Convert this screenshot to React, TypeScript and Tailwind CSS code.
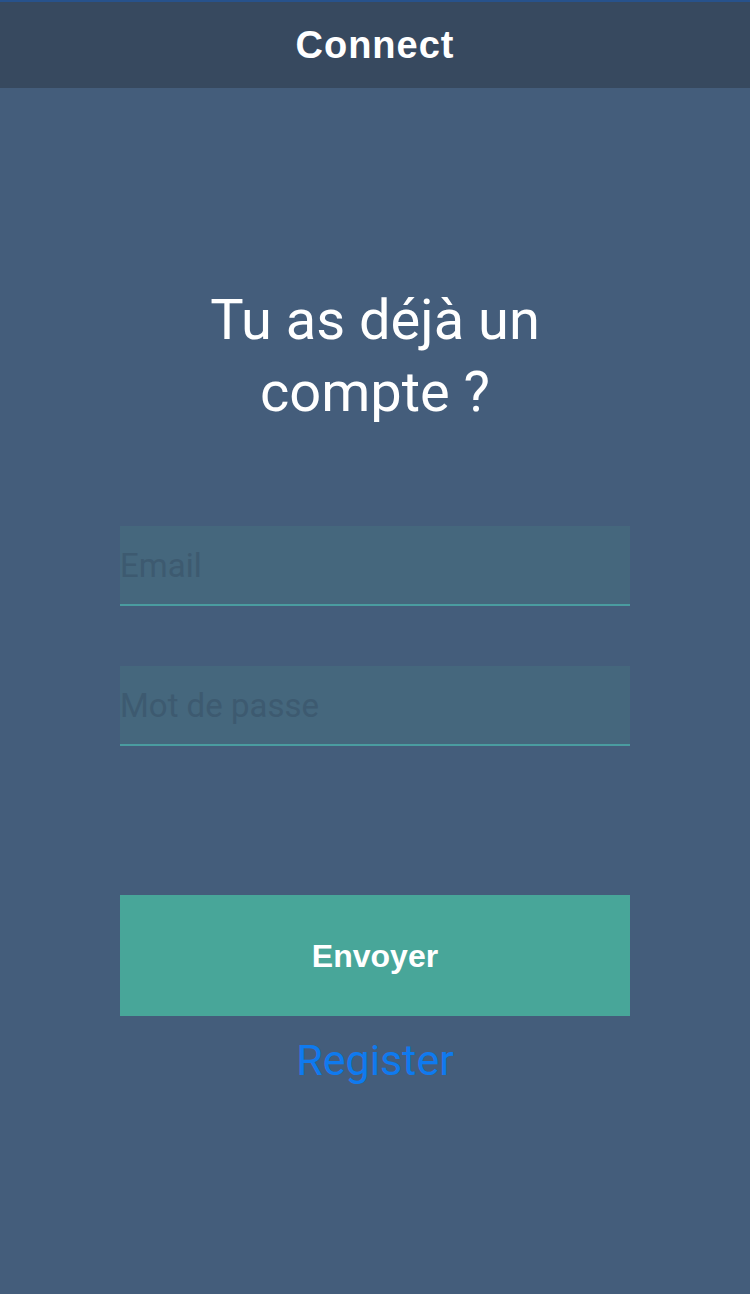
import React from "react";

export default function App() {
  return (
    <div className="w-[750px] h-[1294px] bg-[#445d7b] flex flex-col" style={{ fontFamily: "Roboto, 'Liberation Sans', sans-serif" }}>
      <div className="h-[88px] bg-[#37495f] border-t-2 border-[#27528c] flex items-center justify-center">
        <span className="text-white text-[38px] font-bold tracking-[1px] font-['Liberation_Sans',sans-serif] leading-none">Connect</span>
      </div>
      <div className="flex flex-col items-center">
        <h1 className="mt-[196px] w-[400px] text-center text-white text-[56px] leading-[72px] font-normal">
          Tu as déjà un compte ?
        </h1>
        <div className="mt-[98px] w-[510px] flex flex-col gap-[60px]">
          <div className="h-[80px] bg-[#45677d] border-b-2 border-[#4a9ca0] flex items-center">
            <span className="text-[33px] text-[#3d5a70] leading-none">Email</span>
          </div>
          <div className="h-[80px] bg-[#45677d] border-b-2 border-[#4a9ca0] flex items-center">
            <span className="text-[33px] text-[#3d5a70] leading-none">Mot de passe</span>
          </div>
        </div>
        <button className="mt-[149px] w-[510px] h-[121px] bg-[#48a699] text-white text-[32px] font-bold font-['Liberation_Sans',sans-serif] flex items-center justify-center">
          Envoyer
        </button>
        <div className="mt-[14px] text-[43px] text-[#0f7aef] leading-[60px]">Register</div>
      </div>
    </div>
  );
}
